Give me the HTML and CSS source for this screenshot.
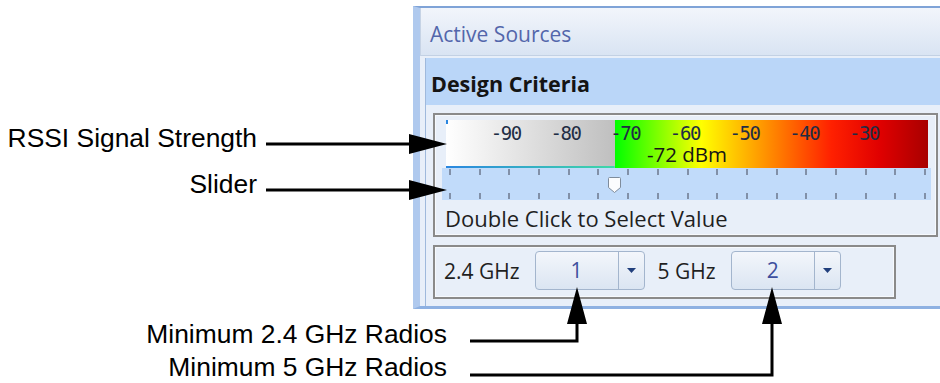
FILE: index.html
```html
<!DOCTYPE html>
<html lang="en">
<head>
  <meta charset="UTF-8">
  <title>Design Criteria</title>
  <link rel="stylesheet" href="styles.css">
</head>
<body>

  <div class="figure">
    <div class="window">
      <div class="pane-title">Active Sources</div>
      <div class="pane">
        <div class="section-head">Design Criteria</div>
        <div class="section-body">

          <div class="group signal-group">
            <div class="meter">
              <div class="scale">
                <span>-90</span><span>-80</span><span>-70</span><span>-60</span><span>-50</span><span>-40</span><span>-30</span>
              </div>
              <div class="reading">-72 dBm</div>
            </div>
            <div class="slider">
              <svg class="thumb" width="15" height="18" viewBox="0 0 15 18">
                <path d="M2.5 1.5h10a1 1 0 0 1 1 1v9l-6 5-6-5v-9a1 1 0 0 1 1-1z" fill="#fbfcfe" stroke="#7f8c9c"/>
              </svg>
            </div>
            <div class="hint">Double Click to Select Value</div>
          </div>

          <div class="group radio-group">
            <span class="band-label">2.4 GHz</span>
            <div class="combo">
              <span class="combo-value">1</span>
              <span class="combo-button"><svg width="9" height="5" viewBox="0 0 9 5"><path d="M0 0h9L4.5 5z" fill="#213f7c"/></svg></span>
            </div>
            <span class="band-label">5 GHz</span>
            <div class="combo">
              <span class="combo-value">2</span>
              <span class="combo-button"><svg width="9" height="5" viewBox="0 0 9 5"><path d="M0 0h9L4.5 5z" fill="#213f7c"/></svg></span>
            </div>
          </div>

        </div>
      </div>
    </div>

    <span class="note note-rssi">RSSI Signal Strength</span>
    <span class="note note-slider">Slider</span>
    <span class="note note-min24">Minimum 2.4 GHz Radios</span>
    <span class="note note-min5">Minimum 5 GHz Radios</span>

    <svg class="leaders" width="940" height="383" viewBox="0 0 940 383">
      <path d="M266 144H410M266 190H410M470 341H577V322M470 375H772V322" stroke="#000" stroke-width="3" fill="none"/>
      <path d="M409 134L447 144L409 154zM409 180L447 190L409 200zM567 324L577 287L587 324zM762 324L772 287L782 324z" fill="#000"/>
    </svg>
  </div>

</body>
</html>
```

FILE: styles.css
```css
html, body {
  margin: 0;
  background: #ffffff;
  overflow: hidden;
}

.figure {
  position: relative;
  width: 940px;
  height: 383px;
  box-sizing: border-box;
  padding: 6px 0 0 413px;
  overflow: hidden;
  font-family: 'Open Sans', sans-serif;
}

/* the captured window */
.window {
  width: 540px;
  border-top: 2px solid #7fa3d7;
  border-left: 7px solid #afc9ee;
  border-bottom: 3px solid #8eb1e2;
  background: #e8eff9;
}

.pane-title {
  height: 42px;
  padding: 5px 0 0 9px;
  line-height: 42px;
  font-size: 21px;
  color: #5366ab;
  background: linear-gradient(#f2f5fb, #d9e4f3);
  border-left: 1px solid #c6d3e5;
  border-bottom: 1px solid #c3d1e4;
}

.pane {
  margin: 2px 0 0 5px;
  border-left: 1px solid #9fb9dc;
}

.section-head {
  height: 42px;
  padding: 5px 0 0 5px;
  line-height: 42px;
  font-size: 21.5px;
  font-weight: 700;
  color: #141414;
  background: #bad6f8;
}

.section-body {
  padding: 8px 0 7px 7px;
}

.group {
  box-sizing: border-box;
  border: 2px solid #8a8a8a;
  box-shadow: inset 0 0 0 1px #f6f9fd;
}

.signal-group {
  width: 505px;
  padding: 5px 0 3px;
}

.radio-group {
  width: 463px;
  margin-top: 8px;
  padding: 4px 0 7px 9px;
  display: flex;
  align-items: center;
}

/* rssi colour meter */
.meter {
  width: 482px;
  height: 48px;
  margin-left: 11px;
  background:
    linear-gradient(#2a86e0, #2a86e0) 0 0 / 2px 4px no-repeat,
    linear-gradient(90deg, #2a86e0, #3fd8a8) 0 100% / 35% 2px no-repeat,
    linear-gradient(90deg, #ffffff 0%, #bfbfbf 35%, #00ff00 35%, #ffff00 53%, #ff8c00 67%, #ff2000 80%, #e00000 90%, #a80000 100%);
}

.scale {
  display: grid;
  grid-template-columns: repeat(7, 59.7px);
  padding: 4px 0 0 30px;
  line-height: 19px;
  font-family: 'DejaVu Sans Mono', monospace;
  font-size: 19px;
  letter-spacing: -1.4px;
  color: #1f2d44;
  text-align: center;
}

.reading {
  margin-top: 2px;
  line-height: 19px;
  font-size: 20.5px;
  color: #161616;
  text-align: center;
}

/* slider track with tick marks */
.slider {
  position: relative;
  width: 489px;
  height: 32px;
  margin-left: 7px;
  background:
    repeating-linear-gradient(90deg, #8190a8 0 2px, transparent 2px 29.69px) 7px 1px / 480px 6px no-repeat,
    repeating-linear-gradient(90deg, #8190a8 0 2px, transparent 2px 29.69px) 7px 25px / 480px 6px no-repeat,
    #c1dbfa;
}

.thumb {
  position: absolute;
  left: 165px;
  top: 8px;
  display: block;
}

.hint {
  margin: 4px 0 0 10px;
  line-height: 28px;
  font-size: 22px;
  color: #1f1f1f;
}

.band-label {
  margin-right: 15px;
  font-size: 21px;
  color: #1f1f1f;
}

.combo {
  width: 110px;
  height: 39px;
  box-sizing: border-box;
  margin-right: 13px;
  display: flex;
  border: 1px solid #a3b5cd;
  border-radius: 4px;
  background: linear-gradient(#f3f6fb, #dbe5f2);
}

.combo-value {
  flex: 1;
  line-height: 37px;
  font-size: 21px;
  color: #3d4f9e;
  text-align: center;
}

.combo-button {
  width: 25px;
  display: flex;
  align-items: center;
  justify-content: center;
  border-left: 1px solid #a3b5cd;
}

/* callout labels and leader arrows */
.note {
  position: absolute;
  line-height: 22px;
  font-family: 'Liberation Sans', Arial, sans-serif;
  font-size: 26.4px;
  color: #000;
  white-space: nowrap;
}

.note-rssi { top: 127px; right: 683px; }
.note-slider { top: 173px; right: 683px; }
.note-min24 { top: 323px; right: 493px; }
.note-min5 { top: 356px; right: 493px; }

.leaders {
  position: absolute;
  left: 0;
  top: 0;
  pointer-events: none;
}
```
